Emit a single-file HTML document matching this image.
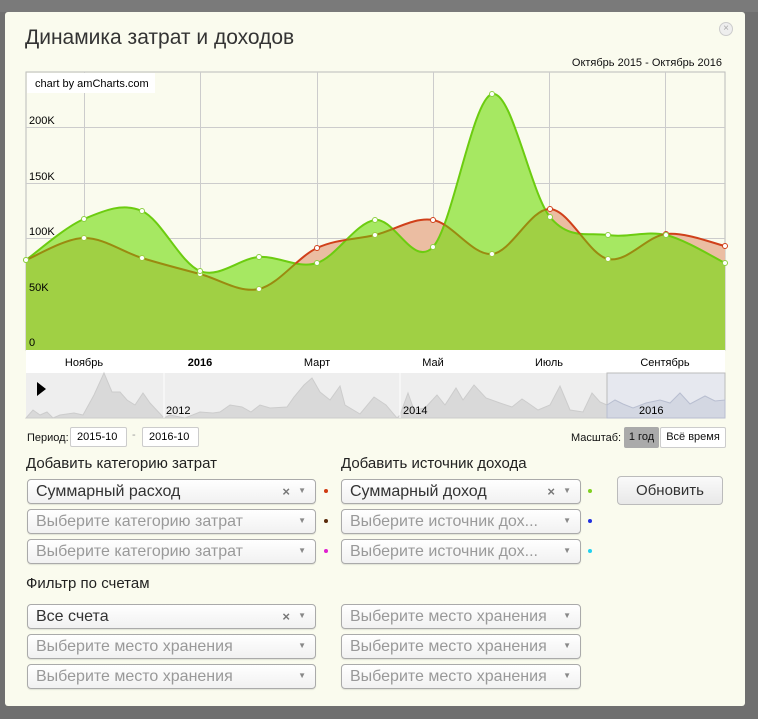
<!DOCTYPE html>
<html><head><meta charset="utf-8"><style>
*{box-sizing:border-box}
body{margin:0;width:758px;height:719px;background:#6f6f6f;font-family:"Liberation Sans",sans-serif;position:relative;overflow:hidden}
.modal{position:absolute;left:5px;top:12px;width:740px;height:694px;background:#fafbee;border-radius:3px}
.abs{position:absolute}
h1{position:absolute;left:20px;top:14px;margin:0;font-weight:normal;font-size:21px;color:#333}
.sel{position:absolute;height:25px;background:linear-gradient(#fff,#f1f1f1);border:1px solid #aaa;border-radius:4px;font-size:16px;color:#333;padding:3px 0 0 8px;box-shadow:0 1px 1px rgba(0,0,0,.1);white-space:nowrap}
.sel.ph{color:#999}
.sel .ar{position:absolute;right:9px;top:6px;font-size:8px;color:#888}
.sel .x{position:absolute;right:25px;top:4px;font-size:13px;color:#777;font-weight:bold}
.dot{position:absolute;width:4px;height:4px;border-radius:50%}
.lbl{position:absolute;font-size:15px;color:#222}
.sm{font-size:11px;color:#111}
.inp{position:absolute;height:20px;border:1px solid #ccc;background:#fff;border-radius:2px;font-size:11px;padding:3px 0 0 6px}
</style></head><body>
<div class="abs" style="left:0;top:0;width:758px;height:12px;background:#7a7a7a"></div>
<div class="modal">
<h1>Динамика затрат и доходов</h1>
<div class="abs" style="left:714px;top:10px;width:14px;height:14px;border-radius:50%;border:1px solid #ccc;background:#eee;color:#aaa;font-size:10px;text-align:center;line-height:12px">×</div>
<div class="abs sm" style="right:23px;top:45px">Октябрь 2015 - Октябрь 2016</div>
</div>
<svg class="abs" style="left:0;top:0" width="758" height="719" id="s">
<rect x="26" y="72" width="699" height="278" fill="#fafbee" stroke="#bbb"/>
<g stroke="#ccc" stroke-width="1">
<line x1="26" x2="725" y1="127.5" y2="127.5"/><line x1="26" x2="725" y1="183.5" y2="183.5"/><line x1="26" x2="725" y1="238.5" y2="238.5"/><line x1="26" x2="725" y1="294.5" y2="294.5"/>
<line x1="84.5" x2="84.5" y1="72" y2="350"/><line x1="200.5" x2="200.5" y1="72" y2="350"/><line x1="317.5" x2="317.5" y1="72" y2="350"/><line x1="433.5" x2="433.5" y1="72" y2="350"/><line x1="549.5" x2="549.5" y1="72" y2="350"/><line x1="665.5" x2="665.5" y1="72" y2="350"/>
</g>
<g id="ch"></g>
<rect x="27" y="73" width="128" height="20" fill="#fff"/>
<text x="35" y="87" font-size="11" fill="#000">chart by amCharts.com</text>
<g font-size="11" fill="#000"><text x="29" y="124">200K</text><text x="29" y="180">150K</text><text x="29" y="235">100K</text><text x="29" y="291">50K</text><text x="29" y="346">0</text></g>
<rect x="26" y="350" width="699" height="23" fill="#fff"/>
<g font-size="11" fill="#000" text-anchor="middle"><text x="84" y="366">Ноябрь</text><text x="200" y="366" font-weight="bold">2016</text><text x="317" y="366">Март</text><text x="433" y="366">Май</text><text x="549" y="366">Июль</text><text x="665" y="366">Сентябрь</text></g>
<rect x="26" y="373" width="699" height="45" fill="#eee"/>
<path d="M26,418 L33,410 40,415 47,412 53,418 60,415 74,413 83,415 94,395 104,373 112,392 120,392 127,400 135,405 143,393 150,403 164,418Z M164,418 L170,415 185,418 200,412 213,413 220,412 230,405 242,407 251,412 260,405 270,408 287,407 294,397 304,385 312,378 320,392 330,400 340,386 345,405 360,414 374,397 386,405 397,418Z M397,418 L400,415 408,393 414,410 425,408 437,395 445,405 456,388 463,400 474,385 486,398 500,403 512,407 522,399 528,403 538,410 550,405 560,386 570,410 583,412 592,393 600,402 607,405 L607,418Z" fill="#d9d9d9" stroke="#ccc"/>
<rect x="607" y="373" width="118" height="45" fill="#e6e8ef" stroke="#bbb"/>
<path d="M607,405 615,400 623,404 633,408 646,403 660,400 670,403 680,393 690,404 705,396 715,401 725,400 V418 H607Z" fill="#d3d7e2" stroke="#b8bed0"/>
<line x1="164" y1="373" x2="164" y2="418" stroke="#fff"/><line x1="400" y1="373" x2="400" y2="418" stroke="#fff"/>
<path d="M37,382 L46,389 37,396Z" fill="#000"/>
<g font-size="11" fill="#000"><text x="166" y="414">2012</text><text x="403" y="414">2014</text><text x="639" y="414">2016</text></g>
</svg>
<div class="abs sm" style="left:27px;top:432px">Период:</div>
<div class="inp" style="left:70px;top:427px;width:57px">2015-10</div>
<div class="abs sm" style="left:132px;top:429px;color:#999">-</div>
<div class="inp" style="left:142px;top:427px;width:57px">2016-10</div>
<div class="abs sm" style="left:571px;top:432px">Масштаб:</div>
<div class="abs sm" style="left:624px;top:427px;width:35px;height:21px;background:#aaa;border-radius:2px;padding-top:4px;text-align:center">1 год</div>
<div class="abs sm" style="left:660px;top:427px;width:66px;height:21px;background:#fff;border:1px solid #ccc;border-radius:2px;padding-top:3px;text-align:center">Всё время</div>
<div class="lbl" style="left:26px;top:455px">Добавить категорию затрат</div>
<div class="lbl" style="left:341px;top:455px">Добавить источник дохода</div>
<div class="sel" style="left:27px;top:479px;width:289px">Суммарный расход<span class="x">×</span><span class="ar">▼</span></div>
<div class="sel ph" style="left:27px;top:509px;width:289px">Выберите категорию затрат<span class="ar">▼</span></div>
<div class="sel ph" style="left:27px;top:539px;width:289px">Выберите категорию затрат<span class="ar">▼</span></div>
<div class="sel" style="left:341px;top:479px;width:240px">Суммарный доход<span class="x">×</span><span class="ar">▼</span></div>
<div class="sel ph" style="left:341px;top:509px;width:240px">Выберите источник дох...<span class="ar">▼</span></div>
<div class="sel ph" style="left:341px;top:539px;width:240px">Выберите источник дох...<span class="ar">▼</span></div>
<div class="dot" style="left:324px;top:489px;background:#d03a10"></div>
<div class="dot" style="left:324px;top:519px;background:#5a2a0a"></div>
<div class="dot" style="left:324px;top:549px;background:#e020d0"></div>
<div class="dot" style="left:588px;top:489px;background:#80d020"></div>
<div class="dot" style="left:588px;top:519px;background:#2030e0"></div>
<div class="dot" style="left:588px;top:549px;background:#20d0f0"></div>
<div class="abs" style="left:617px;top:476px;width:106px;height:29px;border:1px solid #bbb;border-radius:4px;background:linear-gradient(#fafafa,#e8e8e8);font-size:15px;text-align:center;padding-top:5px;color:#333">Обновить</div>
<div class="lbl" style="left:26px;top:575px">Фильтр по счетам</div>
<div class="sel" style="left:27px;top:604px;width:289px">Все счета<span class="x">×</span><span class="ar">▼</span></div>
<div class="sel ph" style="left:27px;top:634px;width:289px">Выберите место хранения<span class="ar">▼</span></div>
<div class="sel ph" style="left:27px;top:664px;width:289px">Выберите место хранения<span class="ar">▼</span></div>
<div class="sel ph" style="left:341px;top:604px;width:240px">Выберите место хранения<span class="ar">▼</span></div>
<div class="sel ph" style="left:341px;top:634px;width:240px">Выберите место хранения<span class="ar">▼</span></div>
<div class="sel ph" style="left:341px;top:664px;width:240px">Выберите место хранения<span class="ar">▼</span></div>
<script>
var xs=[26,84,142,200,259,317,375,433,492,550,608,666,725];
var inc=[260,219,211,271,257,263,220,247,94,217,235,235,263];
var exp=[260,238,258,274,289,248,235,220,254,209,259,234,246];
function curve(y){var d="M"+xs[0]+","+y[0];for(var i=0;i<12;i++){var x0=xs[Math.max(i-1,0)],y0=y[Math.max(i-1,0)],x1=xs[i],y1=y[i],x2=xs[i+1],y2=y[i+1],x3=xs[Math.min(i+2,12)],y3=y[Math.min(i+2,12)];d+=" C"+(x1+(x2-x0)/6)+","+(y1+(y2-y0)/6)+" "+(x2-(x3-x1)/6)+","+(y2-(y3-y1)/6)+" "+x2+","+y2;}return d;}
var ci=curve(inc),ce=curve(exp);
var g=document.getElementById("ch");
var h='<defs><clipPath id="ci"><path d="'+ci+' L725,350 L26,350Z"/></clipPath><clipPath id="ca"><path d="'+ci+' L725,72 L26,72Z"/></clipPath></defs>';
h+='<path d="'+ce+' L725,350 L26,350Z" fill="#ebbda2"/>';
h+='<path d="'+ci+' L725,350 L26,350Z" fill="#a6e862"/>';
h+='<path d="'+ce+' L725,350 L26,350Z" fill="#a0d044" clip-path="url(#ci)"/>';
h+='<path d="'+ci+'" fill="none" stroke="#6ccc10" stroke-width="2"/>';
h+='<path d="'+ce+'" fill="none" stroke="#9a8a10" stroke-width="2" clip-path="url(#ci)"/>';
h+='<path d="'+ce+'" fill="none" stroke="#d0401a" stroke-width="2" clip-path="url(#ca)"/>';
for(var i=0;i<13;i++){h+='<circle cx="'+xs[i]+'" cy="'+exp[i]+'" r="2.5" fill="#fff" stroke="'+(exp[i]<inc[i]?'#d0401a':'#9ccc40')+'"/>';h+='<circle cx="'+xs[i]+'" cy="'+inc[i]+'" r="2.5" fill="#fff" stroke="#8cd040"/>';}
g.innerHTML=h;
</script>
</body></html>
